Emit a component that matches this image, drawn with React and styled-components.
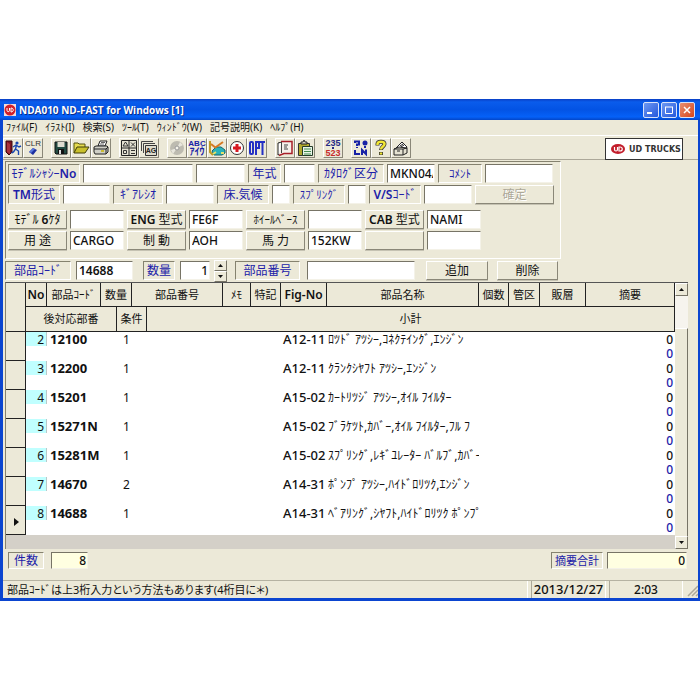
import React, { useState } from 'react';
import styled, { createGlobalStyle } from 'styled-components';

const GlobalStyle = createGlobalStyle`
  * {
    box-sizing: border-box;
  }

  body {
    margin: 0;
    background: #fff;
    color: #111;
    font-family: "Noto Sans", "Noto Sans CJK JP", sans-serif;
    font-size: 12px;
  }

  button,
  input {
    font: inherit;
    color: inherit;
    margin: 0;
    border-radius: 0;
  }
`;

const Page = styled.div`
  padding: 99px 0;
`;

const Window = styled.main`
  background: #ece9d8;
  border: 3px solid #0b45d0;
  border-top: 0;
  border-right-width: 2px;
`;

const TitleBar = styled.header`
  display: flex;
  align-items: center;
  height: 21px;
  margin: 0 -2px 0 -3px;
  padding: 0 5px 0 4px;
  background: linear-gradient(#0a3fc4 0%, #0a5cec 14%, #0353e4 50%, #0561f8 85%, #0346c8 100%);
`;

const Title = styled.h1`
  flex: 1;
  margin: 0 0 0 3px;
  color: #fff;
  font-family: "Open Sans", sans-serif;
  font-size: 10px;
  font-weight: 700;
  line-height: 20px;
  white-space: nowrap;
  text-shadow: 1px 1px 0 #0a2c86;
`;

const CaptionButtons = styled.div`
  display: flex;
  gap: 2px;
`;

const CaptionButton = styled.button`
  display: flex;
  align-items: center;
  justify-content: center;
  width: 16px;
  height: 16px;
  padding: 0;
  border: 1px solid #d8e2fa;
  border-radius: 2px;
  background: ${p => (p.$close ? 'linear-gradient(135deg, #ea8f72, #d6461c)' : 'linear-gradient(135deg, #6d98f2, #2458dc)')};
`;

const MenuBar = styled.nav`
  display: flex;
  gap: 8px;
  height: 16px;
  padding-left: 3px;
  border-bottom: 1px solid #fff;
`;

const MenuItem = styled.button`
  padding: 0;
  border: 0;
  background: none;
  font-size: 10px;
  line-height: 15px;
  white-space: nowrap;
`;

const ToolRow = styled.div`
  display: flex;
  justify-content: space-between;
  height: 24px;
  padding: 2px 15px 0 0;
  border-bottom: 1px solid #aca899;
`;

const Toolbar = styled.div`
  display: flex;
  gap: 8px;
`;

const ToolGroup = styled.div`
  display: flex;
`;

const ToolButton = styled.button`
  width: 20px;
  height: 20px;
  padding: 0;
  border: 1px solid;
  border-color: #fff #8a8778 #8a8778 #fff;
  background: #ece9d8;

  svg {
    display: block;
  }
`;

const Brand = styled.div`
  display: flex;
  align-items: center;
  gap: 4px;
  width: 78px;
  height: 22px;
  padding-left: 5px;
  border: 1px solid #333;
  background: #fff;
  color: #333;
  font-family: "DejaVu Sans", sans-serif;
  font-size: 8px;
  font-weight: 700;
  white-space: nowrap;
`;

const Panel = styled.section`
  display: flex;
  flex-direction: column;
  gap: 2px;
  max-width: 556px;
  height: 98px;
  margin: 1px 0 0 2px;
  padding: 2px;
  border: 1px solid;
  border-color: #85826f #fff #fff #85826f;
`;

const FieldRow = styled.div`
  display: flex;
  gap: 3px;
  margin-top: ${p => p.$top || 0}px;
`;

const Latin = styled.b`
  font-weight: 600;
`;

const Label = styled.label`
  width: ${p => p.$w}px;
  height: 19px;
  border: 1px solid;
  border-color: #85826f #fff #fff #85826f;
  color: #2020a8;
  font-size: ${p => p.$size || 12}px;
  line-height: 17px;
  text-align: center;
  white-space: nowrap;
`;

const Field = styled.input`
  width: ${p => p.$w}px;
  height: 19px;
  padding: 0 1px 0 2px;
  border: 1px solid;
  border-color: #777466 #f4f2e8 #f4f2e8 #777466;
  outline: 0;
  background: ${p => (p.$total ? '#ffffe1' : '#fff')};
  font-weight: ${p => p.$weight || 500};
  line-height: 17px;
  text-align: ${p => (p.$right ? 'right' : 'left')};
`;

const PushButton = styled.button`
  width: ${p => p.$w}px;
  height: 19px;
  padding: 0;
  border: 1px solid;
  border-color: #fff #8a8778 #8a8778 #fff;
  box-shadow: 0 1px 0 #c5c2b2;
  background: #ece9d8;
  font-size: ${p => p.$size || 12}px;
  line-height: 16px;
  white-space: nowrap;

  &:disabled {
    color: #aca899;
    text-shadow: 1px 1px 0 #fff;
  }
`;

const EntryRow = styled.form`
  display: flex;
  align-items: center;
  height: 23px;
  padding-left: 2px;
`;

const Space = styled.span`
  width: ${p => p.$w}px;
`;

const Spinner = styled.div`
  display: flex;
  flex-direction: column;
  width: 13px;
`;

const ArrowButton = styled.button`
  display: flex;
  align-items: center;
  justify-content: center;
  width: 13px;
  height: ${p => p.$h || 11}px;
  padding: 0;
  border: 1px solid;
  border-color: #fff #777466 #777466 #fff;
  background: #ece9d8;
`;

const GridFrame = styled.section`
  display: flex;
  height: 267px;
  margin: 0 10px 0 2px;
  border-top: 1px solid #555;
  border-left: 1px solid #85826f;
`;

const GridBody = styled.div`
  flex: 1;
  min-width: 0;
  background: #d4d0c8;
`;

const Table = styled.table`
  width: 100%;
  border-collapse: separate;
  border-spacing: 0;
  table-layout: fixed;
  background: #fff;
`;

const Th = styled.th`
  height: ${p => (p.rowSpan === 2 ? 49 : p.$short ? 24 : 25)}px;
  padding: 0;
  border-right: 1px solid #222;
  border-bottom: 1px solid #222;
  background: #ece9d8;
  font-size: ${p => p.$size || 12}px;
  font-weight: 400;
  line-height: 16px;
  text-align: center;
  white-space: nowrap;
`;

const Selector = styled.td`
  height: 29px;
  padding: 3px 0 0 8px;
  border-right: 1px solid #222;
  border-bottom: 1px solid #222;
  background: #ece9d8;
`;

const Td = styled.td`
  padding: 0 0 0 ${p => p.$left || 0}px;
  overflow: ${p => (p.$clip ? 'hidden' : 'visible')};
  font-size: ${p => p.$size || 12}px;
  font-weight: ${p => p.$weight || 400};
  line-height: 15px;
  vertical-align: top;
  white-space: nowrap;
`;

const RowNumber = styled.div`
  height: 14px;
  padding-right: 2px;
  border-right: 1px solid #b9c9c9;
  background: #c0ffff;
  text-align: right;
`;

const Amount = styled.div`
  height: ${p => (p.$sub ? 14 : 15)}px;
  padding-right: 2px;
  color: ${p => (p.$sub ? '#2020a8' : 'inherit')};
  line-height: ${p => (p.$sub ? 14 : 15)}px;
  text-align: right;
`;

const ScrollBar = styled.div`
  display: flex;
  flex-direction: column;
  width: 13px;
  background: #f6f4ee;
`;

const Thumb = styled.div`
  flex: 1;
  margin-top: 32px;
  border-right: 1px solid #777466;
  border-top: 1px solid #fff;
  background: #ece9d8;
`;

const Totals = styled.section`
  display: flex;
  justify-content: space-between;
  padding: 3px 11px 0 5px;
`;

const TotalGroup = styled.div`
  display: flex;
  gap: ${p => p.$gap}px;

  label,
  input {
    height: 17px;
    line-height: 15px;
  }
`;

const StatusBar = styled.footer`
  display: flex;
  gap: 3px;
  height: 18px;
  margin-top: 11px;
  padding-left: 1px;
  border-top: 1px solid #b5b2a2;
`;

const StatusCell = styled.div`
  width: ${p => p.$w}px;
  border-right: 1px solid #fff;
  border-left: 1px solid #aca899;
  font-size: ${p => p.$size}px;
  font-weight: 500;
  line-height: 17px;
  text-align: center;
  white-space: nowrap;
`;

const StatusText = styled.div`
  flex: 1;
  padding-left: 3px;
  border-right: 1px solid #fff;
  font-size: 11px;
  font-feature-settings: "palt";
  line-height: 17px;
  white-space: nowrap;
`;

const Icon = ({ children }) => (
  <svg width="18" height="18" viewBox="0 0 18 18" aria-hidden="true">{children}</svg>
);

const Up = () => <svg width="5" height="3"><path d="M0 3L2.5 0 5 3z" fill="#111" /></svg>;
const Down = () => <svg width="5" height="3"><path d="M0 0h5L2.5 3z" fill="#111" /></svg>;

const glyph = {
  fontFamily: '"Liberation Sans", "Noto Sans CJK JP", sans-serif',
  fontWeight: 700,
  textAnchor: 'middle'
};

const ExitIcon = () => (
  <Icon>
    <path d="M2 2h6v11l-3 3-3-3z" fill="#7c1420" stroke="#3a0a10" />
    <path d="M3 3l3 2v10l-3-2z" fill="#a8323c" />
    <circle cx="13" cy="4" r="1.6" fill="#1746b0" />
    <path d="M12.500 6l-1 4M9 8l3-2 3 2 2-1M11.500 10l3 2v4M11.500 10l-2 3-2 1" fill="none" stroke="#1746b0" strokeWidth="1.4" />
  </Icon>
);

const ClearIcon = () => (
  <Icon>
    <text x="9" y="7" fontSize="8" fill="#333" {...glyph} fontWeight="400">CLR</text>
    <path d="M5 13l4-4 4 2-4 5z" fill="#1c2fa0" />
    <path d="M5 13l4-4 2 1-4 4z" fill="#5a78dc" />
  </Icon>
);

const SaveIcon = () => (
  <Icon>
    <path d="M3 3h12v12H4l-1-1z" fill="#234b42" stroke="#111" />
    <path d="M5.500 3h7v5h-7z" fill="#dedcd0" />
    <path d="M6 10h6v5H6z" fill="#111" />
    <path d="M7 11h2v4H7z" fill="#ddd" />
  </Icon>
);

const OpenIcon = () => (
  <Icon>
    <path d="M2 14V4h4l1 1h6v3" fill="#e6dc50" stroke="#55520f" />
    <path d="M2 14l3-6h12l-4 6z" fill="#c9c02c" stroke="#3f3d08" />
  </Icon>
);

const PrintIcon = () => (
  <Icon>
    <path d="M6 7l2-5h7l-2 5z" fill="#fff" stroke="#222" />
    <path d="M8 5h4M9 3.500h4" stroke="#666" />
    <path d="M2 8l2-1h11l1 1v5l-2 2H3l-1-2z" fill="#cfcfc6" stroke="#222" />
    <path d="M2 10h12l2-2M14 10v5" fill="none" stroke="#222" />
    <path d="M9 12h3" stroke="#c9b400" strokeWidth="1.5" />
  </Icon>
);

const FiguresIcon = () => (
  <Icon>
    <path d="M1.500 1.500h15v15h-15zM9 1.500v15M1.500 9h15" fill="#e4e1d2" stroke="#222" />
    <path d="M3 7l2.500-4 2.500 4zM11 3.500l4 4M15 3.500l-4 4M3.500 11.500h3v3h-3zM11 11.500h4M11 14.500h4" fill="none" stroke="#333" />
  </Icon>
);

const PagesIcon = () => (
  <Icon>
    <path d="M1.500 12V2.500H13M3.500 14V4.500H15" fill="none" stroke="#444" />
    <path d="M5.500 6.500h11v10h-11z" fill="#dddacb" stroke="#333" />
    <text x="11" y="14" fontSize="7" fill="#222" {...glyph}>AG</text>
  </Icon>
);

const DiscIcon = () => (
  <Icon>
    <circle cx="9" cy="9" r="7" fill="#bdbbb0" />
    <path d="M9 9l3-6 3 3zM9 9l-4 6-2-4z" fill="#e8e6dc" />
    <circle cx="9" cy="9" r="2" fill="#f4f2e8" stroke="#999" />
  </Icon>
);

const KanaIcon = () => (
  <Icon>
    <text x="9" y="7" fontSize="8" fill="#1722a6" {...glyph}>ABC</text>
    <text x="9" y="16" fontSize="10" fill="#1722a6" {...glyph}>ｱｲｳ</text>
  </Icon>
);

const VehicleIcon = () => (
  <Icon>
    <path d="M2 2v11l3 3" fill="none" stroke="#c09a24" strokeWidth="2" />
    <path d="M4 12l4-4h5l4 3v3l-3 2H6z" fill="#29b2b9" stroke="#17656b" />
    <path d="M8 8l7-5M3 5l5 4" stroke="#d67922" strokeWidth="2" />
    <path d="M5 15l3-2M13 14h3" stroke="#e6e06a" strokeWidth="2" />
  </Icon>
);

const CrossIcon = () => (
  <Icon>
    <circle cx="9" cy="9" r="6.500" fill="#fff" stroke="#333" />
    <path d="M9 5v8M5 9h8" stroke="#d71920" strokeWidth="3" />
  </Icon>
);

const OptionIcon = () => (
  <Icon>
    <g fill="none" stroke="#2330c4" strokeWidth="2">
      <rect x="2" y="3" width="3" height="12" rx="1" />
      <path d="M8 16V3h3v6H8M12 3h5M14.500 3v13" />
    </g>
  </Icon>
);

const BookIcon = () => (
  <Icon>
    <path d="M2 4l4-1v11l-4 2z" fill="#fff" stroke="#222" />
    <path d="M5 2.500h11v12H8l-5 2" fill="#f5f0ea" stroke="#a81e28" strokeWidth="1.500" />
    <path d="M5.500 3v11M8 6h4M8 8h3M8 10h4" stroke="#444" />
  </Icon>
);

const ClipboardIcon = () => (
  <Icon>
    <path d="M2.500 4.500h11v12h-11z" fill="#b1a82d" stroke="#333" />
    <path d="M5 5V3h2l1-2 1 2h2v2z" fill="#d7d4c5" stroke="#222" />
    <path d="M6.500 7.500h10v9h-10z" fill="#e9f4e8" stroke="#243c28" />
    <path d="M8 10h7M8 12.500h7M8 15h7" stroke="#438d50" />
  </Icon>
);

const NumberIcon = () => (
  <Icon>
    <text x="9" y="7" fontSize="9" fill="#262c86" {...glyph}>235</text>
    <path d="M9 8v2" stroke="#262c86" strokeWidth="2" />
    <text x="9" y="17" fontSize="9" fill="#c62c2c" {...glyph}>523</text>
  </Icon>
);

const SearchIcon = () => (
  <Icon>
    <path d="M3 4V2.500h4v3H5V7M5 8v1" fill="none" stroke="#1722a6" strokeWidth="2" />
    <circle cx="13" cy="4" r="2.500" fill="#1722a6" />
    <path d="M13 7v2M3 11v4h5M10 16v-5l4 4v-4.500" fill="none" stroke="#1722a6" strokeWidth="2" />
  </Icon>
);

const HelpIcon = () => (
  <Icon>
    <g fill="none">
      <path d="M5.500 6.500V5c0-3 7-3 7 0 0 2.500-3.500 2.500-3.500 6M9 13v3" stroke="#333" strokeWidth="4" />
      <path d="M5.500 6V5c0-3 7-3 7 0 0 2.500-3.500 2.500-3.500 5.500M9 13.500v2" stroke="#f2e733" strokeWidth="2.500" />
    </g>
  </Icon>
);

const CardIcon = () => (
  <Icon>
    <path d="M4 9l6-6 5 5-2 4" fill="#fff" stroke="#222" />
    <path d="M2 10l5-2 8 1v5l-4 2H2z" fill="#e5e2d2" stroke="#222" />
    <path d="M2 10h9v6M11 10l4-1M8 7l3-2M9 8l3-2M5 12h3" fill="none" stroke="#222" />
  </Icon>
);

const Emblem = () => (
  <svg width="14" height="10" viewBox="0 0 14 10" aria-hidden="true">
    <ellipse cx="7" cy="5" rx="7" ry="5" fill="#c21d2b" />
    <path d="M3.500 3v2.500c0 2 3 2 3 0V3M8 3v4h1c3 0 3-4 0-4z" fill="none" stroke="#fff" strokeWidth="1.200" />
  </svg>
);

const AppIcon = () => (
  <svg width="12" height="12" viewBox="0 0 12 12" aria-hidden="true">
    <path d="M0 0h12v12H0z" fill="#f3dcdc" />
    <circle cx="6" cy="6" r="5.500" fill="#d01f2a" />
    <path d="M3 4v2.500c0 1.500 2.500 1.500 2.500 0V4M7 4v4c3 0 3-4 0-4z" fill="none" stroke="#fff" />
  </svg>
);

const menus = ['ﾌｧｲﾙ(F)', 'ｲﾗｽﾄ(I)', '検索(S)', 'ﾂｰﾙ(T)', 'ｳｨﾝﾄﾞｳ(W)', '記号説明(K)', 'ﾍﾙﾌﾟ(H)'];

const tools = [
  [['終了', ExitIcon], ['クリア', ClearIcon]],
  [['保存', SaveIcon], ['開く', OpenIcon], ['印刷', PrintIcon]],
  [['図', FiguresIcon], ['ページ', PagesIcon]],
  [['ディスク', DiscIcon], ['ABC アイウ', KanaIcon], ['車両', VehicleIcon], ['追加', CrossIcon], ['OPT', OptionIcon]],
  [['カタログ', BookIcon], ['貼り付け', ClipboardIcon]],
  [['番号変換', NumberIcon]],
  [['検索', SearchIcon], ['ヘルプ', HelpIcon], ['カード', CardIcon]]
];

const specs = [
  [
    { id: 'model', label: <>ﾓﾃﾞﾙ <Latin>6</Latin>ｹﾀ</>, value: '' },
    { id: 'engine', label: <><Latin>ENG</Latin> 型式</>, value: 'FE6F' },
    { id: 'wheelbase', label: 'ﾎｲｰﾙﾍﾞｰｽ', value: '', size: 11 },
    { id: 'cab', label: <><Latin>CAB</Latin> 型式</>, value: 'NAMI' }
  ],
  [
    { id: 'use', label: '用 途', value: 'CARGO' },
    { id: 'brake', label: '制 動', value: 'AOH' },
    { id: 'power', label: '馬 力', value: '152KW' },
    { id: 'spare', label: '', value: '' }
  ]
];

const columns = [20, 21, 54, 16, 15, 15, 76, 28, 30, 46, null, 30, 31, 46, 89];

const parts = [
  { no: 2, code: '12100', qty: 1, fig: 'A12-11', name: 'ﾛﾂﾄﾞ ｱﾂｼｰ,ｺﾈｸﾃｲﾝｸﾞ,ｴﾝｼﾞﾝ' },
  { no: 3, code: '12200', qty: 1, fig: 'A12-11', name: 'ｸﾗﾝｸｼﾔﾌﾄ ｱﾂｼｰ,ｴﾝｼﾞﾝ' },
  { no: 4, code: '15201', qty: 1, fig: 'A15-02', name: 'ｶｰﾄﾘﾂｼﾞ ｱﾂｼｰ,ｵｲﾙ ﾌｲﾙﾀｰ' },
  { no: 5, code: '15271N', qty: 1, fig: 'A15-02', name: 'ﾌﾞﾗｹﾂﾄ,ｶﾊﾞｰ,ｵｲﾙ ﾌｲﾙﾀｰ,ﾌﾙ ﾌ' },
  { no: 6, code: '15281M', qty: 1, fig: 'A15-02', name: 'ｽﾌﾟﾘﾝｸﾞ,ﾚｷﾞﾕﾚｰﾀｰ ﾊﾞﾙﾌﾞ,ｶﾊﾞｰ' },
  { no: 7, code: '14670', qty: 2, fig: 'A14-31', name: 'ﾎﾟﾝﾌﾟ ｱﾂｼｰ,ﾊｲﾄﾞﾛﾘﾂｸ,ｴﾝｼﾞﾝ' },
  { no: 8, code: '14688', qty: 1, fig: 'A14-31', name: 'ﾍﾞｱﾘﾝｸﾞ,ｼﾔﾌﾄ,ﾊｲﾄﾞﾛﾘﾂｸ ﾎﾟﾝﾌﾟ' }
];

const VehiclePanel = () => (
  <Panel>
    <FieldRow>
      <Label htmlFor="chassis" $w={72}>ﾓﾃﾞﾙｼｬｼｰ<Latin>No</Latin></Label>
      <Field id="chassis" $w={110} />
      <Field aria-label="シャシーNo 2" $w={49} />
      <Label htmlFor="year" $w={33}>年式</Label>
      <Field id="year" $w={31} />
      <Label htmlFor="catalog" $w={66}>ｶﾀﾛｸﾞ区分</Label>
      <Field id="catalog" $w={48} defaultValue="MKN04A" />
      <Label htmlFor="comment" $w={44} $size={11}>ｺﾒﾝﾄ</Label>
      <Field id="comment" $w={68} />
    </FieldRow>
    <FieldRow>
      <Label htmlFor="tm" $w={52}><Latin>TM</Latin>形式</Label>
      <Field id="tm" $w={47} />
      <Label htmlFor="gear" $w={50}>ｷﾞｱﾚｼｵ</Label>
      <Field id="gear" $w={48} />
      <Label htmlFor="climate" $w={52}>床.気候</Label>
      <Field id="climate" $w={18} />
      <Label htmlFor="spring" $w={52} $size={11}>ｽﾌﾟﾘﾝｸﾞ</Label>
      <Field id="spring" $w={18} />
      <Label htmlFor="vs" $w={52}><Latin>V/S</Latin>ｺｰﾄﾞ</Label>
      <Field id="vs" $w={48} />
      <PushButton type="button" $w={79} disabled>確定</PushButton>
    </FieldRow>
    {specs.map((row, i) => (
      <FieldRow key={i} $top={i ? 0 : 4}>
        {row.map(spec => (
          <React.Fragment key={spec.id}>
            <PushButton type="button" id={`${spec.id}-name`} $w={59} $size={spec.size}>{spec.label}</PushButton>
            <Field $w={54} aria-labelledby={`${spec.id}-name`} defaultValue={spec.value} />
          </React.Fragment>
        ))}
      </FieldRow>
    ))}
  </Panel>
);

const PartEntry = () => {
  const [qty, setQty] = useState(1);

  return (
    <EntryRow onSubmit={e => e.preventDefault()}>
      <Label htmlFor="code" $w={66}>部品ｺｰﾄﾞ</Label>
      <Space $w={5} />
      <Field id="code" $w={57} $weight={600} defaultValue="14688" />
      <Space $w={10} />
      <Label htmlFor="qty" $w={32}>数量</Label>
      <Space $w={5} />
      <Field id="qty" $w={30} $right value={qty} onChange={e => setQty(Number(e.target.value) || 0)} />
      <Space $w={4} />
      <Spinner>
        <ArrowButton type="button" aria-label="増やす" onClick={() => setQty(qty + 1)}><Up /></ArrowButton>
        <ArrowButton type="button" aria-label="減らす" onClick={() => setQty(Math.max(0, qty - 1))}><Down /></ArrowButton>
      </Spinner>
      <Space $w={8} />
      <Label htmlFor="number" $w={65}>部品番号</Label>
      <Space $w={7} />
      <Field id="number" $w={108} />
      <Space $w={11} />
      <PushButton $w={62}>追加</PushButton>
      <Space $w={9} />
      <PushButton type="button" $w={61}>削除</PushButton>
    </EntryRow>
  );
};

const PartsGrid = () => {
  const [current, setCurrent] = useState(8);

  return (
    <GridFrame>
      <GridBody>
        <Table>
          <colgroup>
            {columns.map((w, i) => <col key={i} width={w || undefined} />)}
          </colgroup>
          <thead>
            <tr>
              <Th rowSpan={2} />
              <Th $short><Latin>No</Latin></Th>
              <Th $short $size={11}>部品ｺｰﾄﾞ</Th>
              <Th $short colSpan={2} $size={11}>数量</Th>
              <Th $short colSpan={2} $size={11}>部品番号</Th>
              <Th $short $size={11}>ﾒﾓ</Th>
              <Th $short $size={11}>特記</Th>
              <Th $short><Latin>Fig-No</Latin></Th>
              <Th $short $size={11}>部品名称</Th>
              <Th $short $size={11}>個数</Th>
              <Th $short $size={11}>管区</Th>
              <Th $short $size={11}>販層</Th>
              <Th $short $size={11}>摘要</Th>
            </tr>
            <tr>
              <Th colSpan={3} $size={11}>後対応部番</Th>
              <Th colSpan={2} $size={11}>条件</Th>
              <Th colSpan={9} $size={11}>小計</Th>
            </tr>
          </thead>
          <tbody>
            {parts.map(part => (
              <tr key={part.no} onClick={() => setCurrent(part.no)}>
                <Selector>
                  {part.no === current && <svg width="5" height="8"><path d="M0 0l5 4-5 4z" fill="#111" /></svg>}
                </Selector>
                <Td><RowNumber>{part.no}</RowNumber></Td>
                <Td $left={3} $size={13} $weight={700}>{part.code}</Td>
                <Td colSpan={2} $left={22}>{part.qty}</Td>
                <Td colSpan={2} />
                <Td />
                <Td />
                <Td $left={2} $size={13} $weight={500}>{part.fig}</Td>
                <Td $left={1} $clip>{part.name}</Td>
                <Td />
                <Td />
                <Td />
                <Td $weight={500}>
                  <Amount>0</Amount>
                  <Amount $sub>0</Amount>
                </Td>
              </tr>
            ))}
          </tbody>
        </Table>
      </GridBody>
      <ScrollBar>
        <ArrowButton type="button" aria-label="上へ" $h={13}><Up /></ArrowButton>
        <Thumb />
        <ArrowButton type="button" aria-label="下へ" $h={13}><Down /></ArrowButton>
      </ScrollBar>
    </GridFrame>
  );
};

const App = () => (
  <Page>
    <GlobalStyle />
    <Window>
      <TitleBar>
        <AppIcon />
        <Title>NDA010 ND-FAST for Windows [1]</Title>
        <CaptionButtons>
          <CaptionButton aria-label="最小化"><svg width="10" height="10"><path d="M1 8h5" stroke="#fff" strokeWidth="2" /></svg></CaptionButton>
          <CaptionButton aria-label="最大化"><svg width="10" height="10"><path d="M1 2h8M1.500 2v6.500h7V2" fill="none" stroke="#fff" /></svg></CaptionButton>
          <CaptionButton aria-label="閉じる" $close><svg width="10" height="10"><path d="M2 2l6 6M8 2L2 8" stroke="#fff" strokeWidth="1.500" /></svg></CaptionButton>
        </CaptionButtons>
      </TitleBar>
      <MenuBar>
        {menus.map(menu => <MenuItem key={menu}>{menu}</MenuItem>)}
      </MenuBar>
      <ToolRow>
        <Toolbar>
          {tools.map((group, i) => (
            <ToolGroup key={i}>
              {group.map(([name, Glyph]) => (
                <ToolButton key={name} aria-label={name}><Glyph /></ToolButton>
              ))}
            </ToolGroup>
          ))}
        </Toolbar>
        <Brand><Emblem />UD TRUCKS</Brand>
      </ToolRow>
      <VehiclePanel />
      <PartEntry />
      <PartsGrid />
      <Totals>
        <TotalGroup $gap={7}>
          <Label htmlFor="count" $w={36}>件数</Label>
          <Field id="count" $w={37} $right $total readOnly value="8" />
        </TotalGroup>
        <TotalGroup $gap={4}>
          <Label htmlFor="sum" $w={52} $size={11}>摘要合計</Label>
          <Field id="sum" $w={80} $right $total readOnly value="0" />
        </TotalGroup>
      </Totals>
      <StatusBar>
        <StatusText>部品ｺｰﾄﾞは上3桁入力という方法もあります(4桁目に＊)</StatusText>
        <StatusCell $w={75} $size={13}>2013/12/27</StatusCell>
        <StatusCell $w={74} $size={12}>2:03</StatusCell>
        <svg width="12" height="16" aria-hidden="true">
          <path d="M2 15L12 5M6 15l6-6M10 15l2-2" stroke="#aca899" strokeWidth="1.500" />
        </svg>
      </StatusBar>
    </Window>
  </Page>
);

export default App;
